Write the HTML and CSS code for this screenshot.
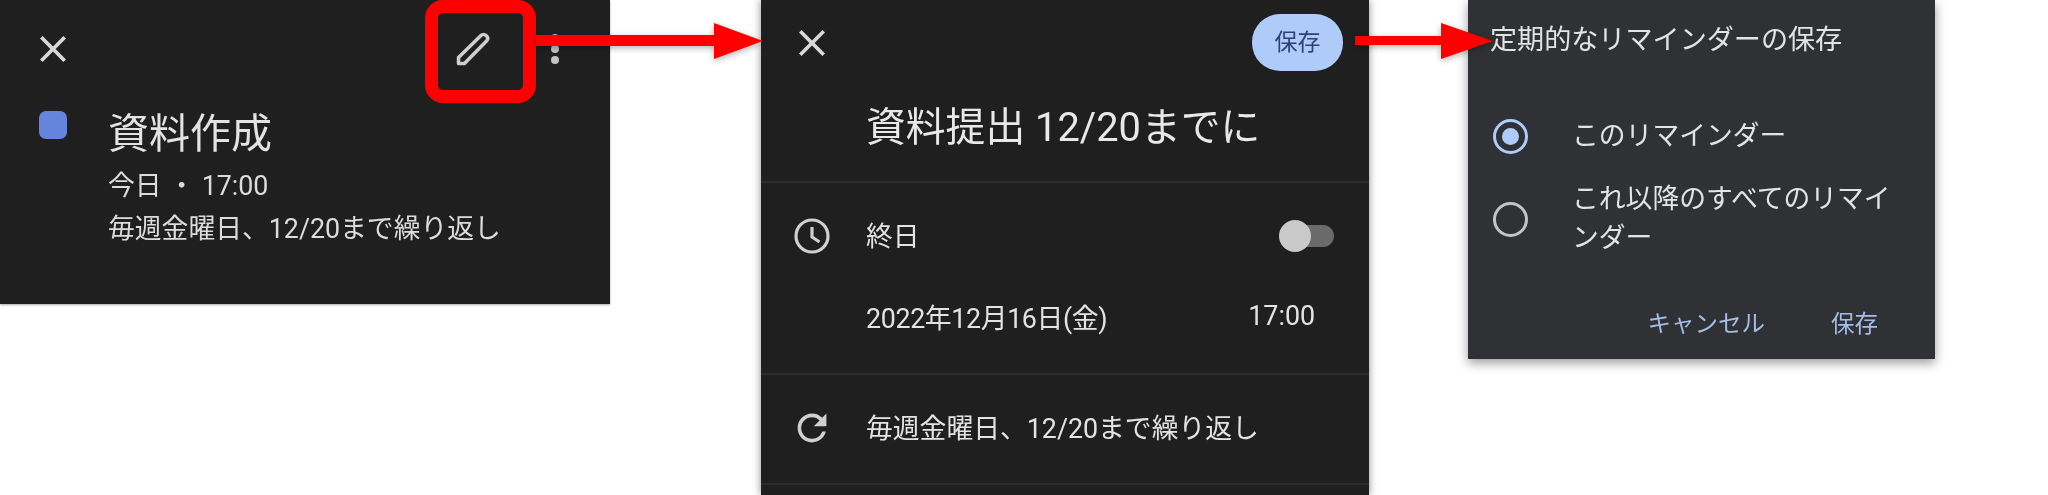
FILE: index.html

```html
<!DOCTYPE html>
<html lang="ja">
  <head>
    <meta charset="UTF-8" />
    <title>リマインダーの編集</title>
    <link rel="stylesheet" href="styles.css">
  </head>
  <body>
    <div class="canvas">
      <!-- 1: detail -->
      <div class="panel panel-detail">
        <div class="detail-bar">
          <svg class="icon-close" viewBox="5 5 14 14"><path d="M19 6.41 17.59 5 12 10.59 6.41 5 5 6.41 10.59 12 5 17.59 6.41 19 12 13.41 17.59 19 19 17.59 13.41 12z"/></svg>
          <svg class="icon-pencil" viewBox="0 0 34 34"><path d="M2.5 31.5V25.5L25 3.5c1.5-1.5 3.5-1.5 5 0l.5.5c1.5 1.5 1.5 3.5 0 5L8.5 31.5z"/></svg>
          <div class="dots"><span></span><span></span><span></span></div>
        </div>
        <div class="detail-body">
          <div class="color-chip"></div>
          <div>
            <h2 class="detail-title">資料作成</h2>
            <p class="detail-line first">今日 ・ 17:00</p>
            <p class="detail-line">毎週金曜日、12/20まで繰り返し</p>
          </div>
        </div>
      </div>

      <!-- 2: edit -->
      <div class="panel panel-edit">
        <div class="edit-bar">
          <svg class="icon-close" viewBox="5 5 14 14"><path d="M19 6.41 17.59 5 12 10.59 6.41 5 5 6.41 10.59 12 5 17.59 6.41 19 12 13.41 17.59 19 19 17.59 13.41 12z"/></svg>
          <button class="save-pill">保存</button>
        </div>
        <h2 class="edit-title">資料提出 12/20までに</h2>
        <div class="section">
          <div class="row">
            <svg class="row-icon" viewBox="0 0 36 36"><circle cx="18" cy="18" r="16"/><path d="M18 9v10l7.5 5"/></svg>
            <span class="row-text">終日</span>
            <div class="toggle"><span class="knob"></span></div>
          </div>
          <div class="row row-date">
            <span class="row-text date-text">2022年12月16日(金)</span>
            <span class="row-text">17:00</span>
          </div>
        </div>
        <div class="section">
          <div class="row">
            <svg class="row-icon solid" viewBox="2 2 20 20"><path d="M17.65 6.35A7.958 7.958 0 0 0 12 4c-4.42 0-7.99 3.58-7.99 8s3.57 8 7.99 8c3.73 0 6.84-2.55 7.73-6h-2.08A5.99 5.99 0 0 1 12 18c-3.31 0-6-2.69-6-6s2.69-6 6-6c1.66 0 3.14.69 4.22 1.78L13 11h7V4l-2.35 2.35z"/></svg>
            <span class="row-text">毎週金曜日、12/20まで繰り返し</span>
          </div>
        </div>
        <div class="section"></div>
      </div>

      <!-- 3: dialog -->
      <div class="panel panel-dialog">
        <h3 class="dialog-title">定期的なリマインダーの保存</h3>
        <div class="option selected">
          <span class="radio"></span>
          <span class="option-text">このリマインダー</span>
        </div>
        <div class="option">
          <span class="radio"></span>
          <span class="option-text">これ以降のすべてのリマインダー</span>
        </div>
        <div class="dialog-actions">
          <span>キャンセル</span>
          <span>保存</span>
        </div>
      </div>

      <!-- annotations -->
      <div class="red-frame"></div>
      <svg class="arrow arrow-one" viewBox="0 0 227 36"><path d="M0 12H178V0L227 18 178 36V23H0z"/></svg>
      <svg class="arrow arrow-two" viewBox="0 0 138 36"><path d="M0 13H86V0L138 18 86 36V22H0z"/></svg>
    </div>
  </body>
</html>
```

FILE: styles.css

```css
body {
  margin: 0;
  background: #fff;
  overflow: hidden;
  font-family: Roboto, "Noto Sans CJK JP", sans-serif;
  color: #e3e3e3;
}
h2, h3, p {
  margin: 0;
  font-weight: 400;
}
.canvas {
  position: relative;
  display: flex;
  align-items: flex-start;
  width: 2048px;
  height: 495px;
  overflow: hidden;
  filter: blur(0.4px);
}
.panel {
  flex: none;
  box-sizing: border-box;
  background: #1f1f1f;
}
.icon-close {
  width: 26px;
  height: 26px;
  fill: #d8d8d8;
}

/* detail */
.panel-detail {
  width: 610px;
  height: 304px;
  margin-right: 151px;
  box-shadow: 0 1px 2px rgba(0, 0, 0, 0.35);
}
.detail-bar {
  display: flex;
  align-items: center;
  height: 98px;
  padding: 0 51px 0 40px;
}
.detail-bar .icon-close {
  margin-right: auto;
}
.icon-pencil {
  width: 34px;
  height: 34px;
  margin-right: 61px;
  fill: none;
  stroke: #cfcfcf;
  stroke-width: 3.5;
  stroke-linejoin: round;
}
.dots {
  display: flex;
  flex-direction: column;
  gap: 3px;
}
.dots span {
  width: 8px;
  height: 8px;
  border-radius: 50%;
  background: #c4c4c4;
}
.detail-body {
  display: flex;
  align-items: flex-start;
  padding: 10px 0 0 39px;
}
.color-chip {
  width: 28px;
  height: 28px;
  margin: 3px 41px 0 0;
  border-radius: 7px;
  background: #6585dc;
}
.detail-title {
  font-size: 41px;
  line-height: 52px;
}
.detail-line {
  font-size: 26.8px;
  line-height: 43px;
  color: #dcdcdc;
}
.detail-line.first {
  margin-top: 5px;
}

/* edit */
.panel-edit {
  width: 608px;
  height: 495px;
  margin-right: 99px;
  box-shadow: 0 0 8px rgba(0, 0, 0, 0.45);
}
.edit-bar {
  display: flex;
  align-items: center;
  justify-content: space-between;
  padding: 14px 26px 0 38px;
}
.save-pill {
  width: 91px;
  height: 57px;
  padding: 0 0 5px;
  border: 0;
  border-radius: 28px;
  background: #aecbfa;
  color: #2a4478;
  font-family: inherit;
  font-size: 23px;
}
.edit-title {
  margin: 31px 0 27px;
  padding-left: 105px;
  font-size: 39.8px;
  line-height: 52px;
  color: #e8e8e8;
}
.section {
  padding: 27px 35px 29px 33px;
  border-top: 2px solid #2b2b2b;
}
.row {
  display: flex;
  align-items: center;
  height: 52px;
  font-size: 26.8px;
}
.row-text {
  padding-bottom: 4px;
}
.row-date {
  margin-top: 30px;
  padding: 0 19px 0 72px;
  justify-content: space-between;
}
.date-text {
  letter-spacing: -0.35px;
}
.row-icon {
  flex: none;
  width: 36px;
  height: 36px;
  margin-right: 36px;
  fill: none;
  stroke: #d0d0d0;
  stroke-width: 3.2;
}
.row-icon.solid {
  fill: #d0d0d0;
  stroke: none;
}
.toggle {
  position: relative;
  width: 46px;
  height: 22px;
  margin-left: auto;
  border-radius: 11px;
  background: #6a6a6a;
}
.knob {
  position: absolute;
  top: -5px;
  left: -9px;
  width: 32px;
  height: 32px;
  border-radius: 50%;
  background: #c9c9c9;
}

/* dialog */
.panel-dialog {
  width: 467px;
  height: 359px;
  padding: 20px 32px 0 22px;
  background: #303134;
  box-shadow: 0 4px 10px rgba(0, 0, 0, 0.4);
}
.dialog-title {
  font-size: 27.1px;
  line-height: 40px;
  white-space: nowrap;
}
.option {
  display: flex;
  align-items: center;
  margin: 24px 0 0 3px;
  font-size: 26.8px;
  line-height: 39px;
}
.dialog-title + .option {
  margin-top: 57px;
}
.radio {
  flex: none;
  box-sizing: border-box;
  display: flex;
  align-items: center;
  justify-content: center;
  width: 35px;
  height: 35px;
  margin-right: 44px;
  border: 3px solid #c4c4c4;
  border-radius: 50%;
}
.selected .radio {
  border-color: #aecbfa;
}
.selected .radio::after {
  content: "";
  width: 17px;
  height: 17px;
  border-radius: 50%;
  background: #aecbfa;
}
.dialog-actions {
  display: flex;
  justify-content: flex-end;
  gap: 66px;
  margin: 49px 25px 0 0;
  font-size: 23.5px;
  line-height: 34px;
  color: #a3bde8;
}

/* annotations */
.red-frame {
  position: absolute;
  top: 0;
  left: 425px;
  box-sizing: border-box;
  width: 111px;
  height: 103px;
  border: 13px solid #f00;
  border-radius: 18px;
}
.arrow {
  position: absolute;
  top: 23px;
  height: 36px;
  fill: #f00;
  filter: drop-shadow(0 2px 3px rgba(0, 0, 0, 0.3));
}
.arrow-one {
  left: 536px;
  width: 227px;
}
.arrow-two {
  left: 1355px;
  width: 138px;
}
```
